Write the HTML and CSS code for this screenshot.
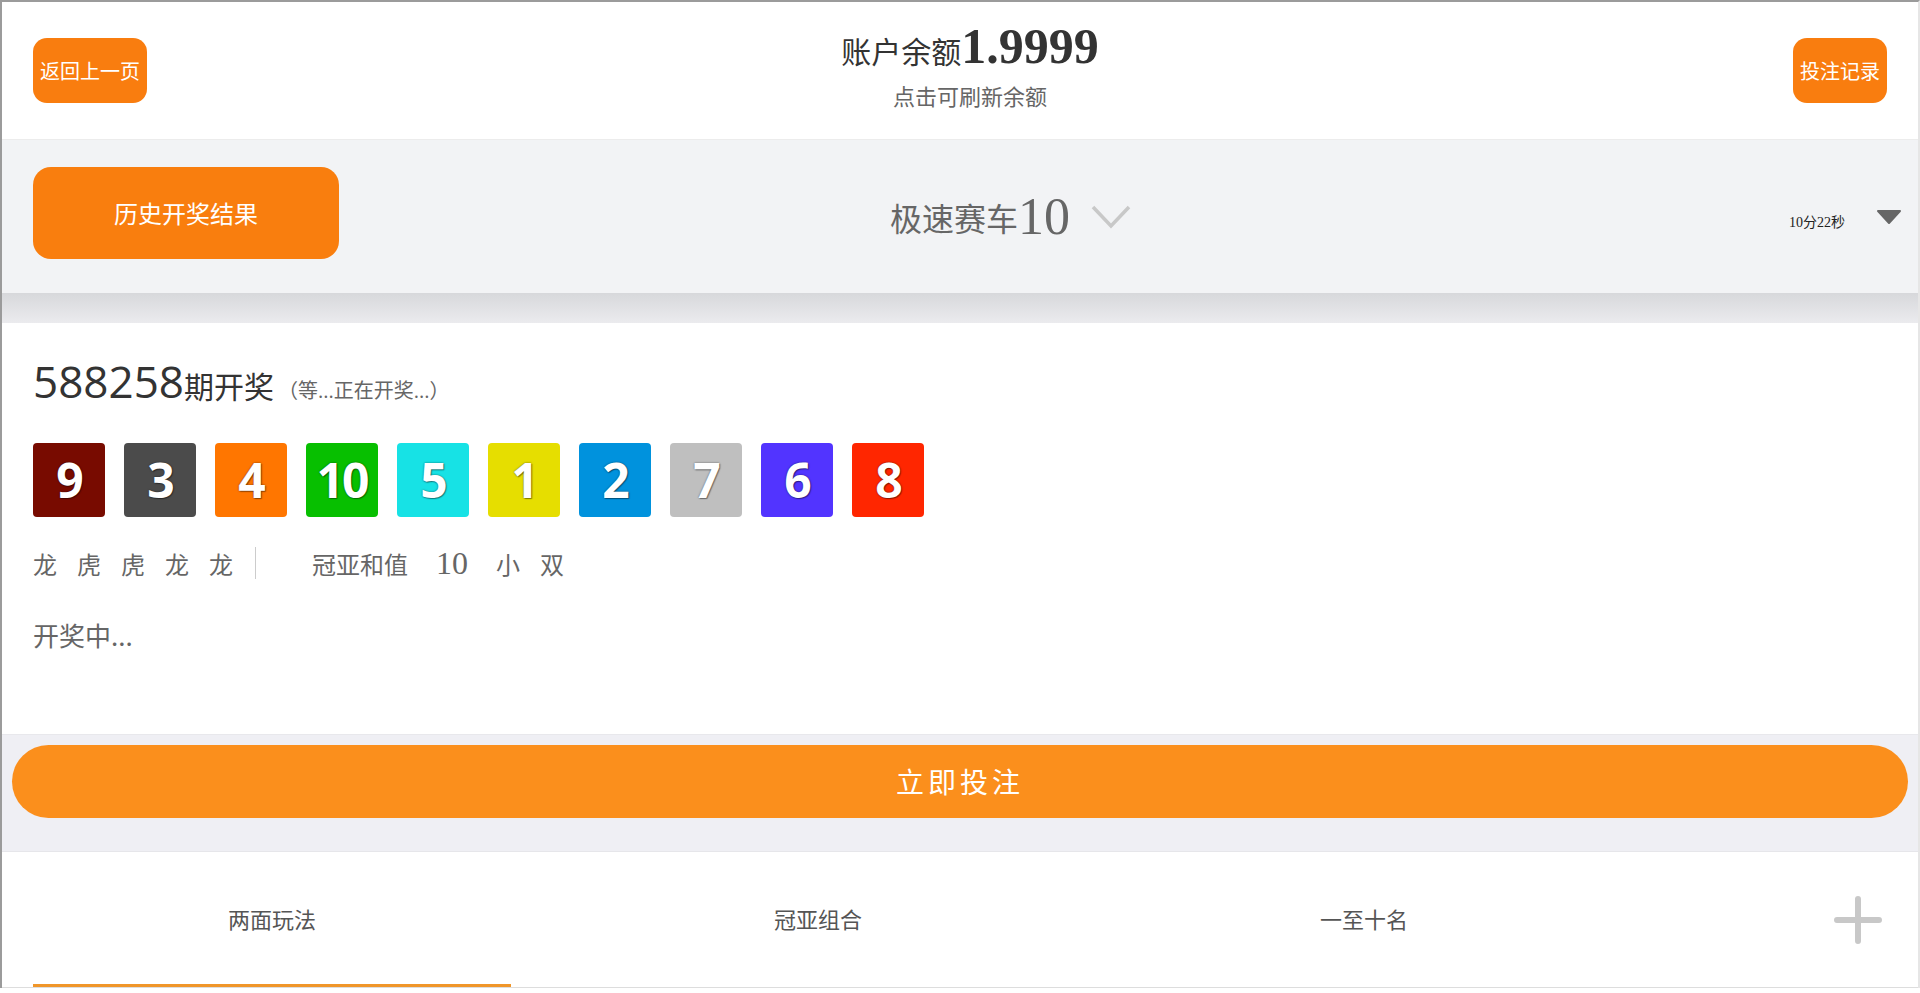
FILE: index.html
```html
<!DOCTYPE html>
<html lang="zh-CN">
<head>
    <meta charset="UTF-8">
    <title>极速赛车</title>
    <link rel="stylesheet" href="styles.css">
</head>
<body>
<div class="page">
    <header class="top">
        <a class="btn-sm">返回上一页</a>
        <div class="title-box">
            <h1 class="title"><span class="cn">账户余额</span>1.9999</h1>
            <p class="sub">点击可刷新余额</p>
        </div>
        <a class="btn-sm">投注记录</a>
    </header>

    <!-- GAME BAR -->
    <section class="bar">
        <a class="btn-hist">历史开奖结果</a>
        <div class="game">
            <span class="cn">极速赛车</span>10
            <svg class="chev" width="42" height="26" viewBox="0 0 42 26"><polyline points="3,3 21,22 39,3" fill="none" stroke="#c8c8c8" stroke-width="3.5"/></svg>
        </div>
        <div class="timer">
            <span>10分22秒</span>
            <svg width="26" height="16" viewBox="0 0 26 16"><path d="M2 2h22L13 14z" fill="#666" stroke="#666" stroke-width="2" stroke-linejoin="round"/></svg>
        </div>
    </section>
    <div class="shade"></div>

    <!-- LAST DRAW -->
    <section class="draw">
        <div class="issue">588258<span class="cn">期开奖</span><small>（等...正在开奖...）</small></div>
        <div class="balls">
            <span class="ball n9">9</span>
            <span class="ball n3">3</span>
            <span class="ball n4">4</span>
            <span class="ball n10">10</span>
            <span class="ball n5">5</span>
            <span class="ball n1">1</span>
            <span class="ball n2">2</span>
            <span class="ball n7">7</span>
            <span class="ball n6">6</span>
            <span class="ball n8">8</span>
        </div>
        <div class="stats">
            <span>龙</span><span>虎</span><span>虎</span><span>龙</span><span>龙</span>
            <i class="sep"></i>
            <span class="sum">冠亚和值</span><span class="num">10</span><span>小</span><span>双</span>
        </div>
        <p class="status">开奖中...</p>
    </section>

    <div class="action"><a class="btn-bet">立即投注</a></div>

    <nav class="tabs">
        <a class="tab active">两面玩法</a>
        <a class="tab">冠亚组合</a>
        <a class="tab">一至十名</a>
        <svg class="plus" width="48" height="48" viewBox="0 0 48 48"><path d="M24 3v42M3 24h42" stroke="#c8c8c8" stroke-width="6" stroke-linecap="round"/></svg>
    </nav>
</div>
</body>
</html>
```

FILE: styles.css
```css
html {
    box-sizing: border-box;
    background: #fff;
}

*, *:before, *:after {
    box-sizing: inherit;
}

body {
    margin: 0;
    font-family: 'Liberation Serif', 'Noto Sans CJK SC', serif;
    color: #333;
}

a {
    text-decoration: none;
}

.page {
    width: 1920px;
    border-top: 2px solid #9b9b9b;
    border-left: 2px solid #9b9b9b;
    border-right: 2px solid #e6e6e6;
}

.cn {
    font-family: 'Noto Sans CJK SC', sans-serif;
}

/* header */
.top {
    display: flex;
    align-items: center;
    height: 137px;
    padding: 0 31px;
    background: #fff;
}

.btn-sm {
    height: 65px;
    line-height: 65px;
    padding: 0 7px;
    border-radius: 14px;
    background: #f97d0f;
    color: #fff;
    font-size: 20px;
    font-family: 'Noto Sans CJK SC', sans-serif;
}

.title-box {
    flex: 1;
    text-align: center;
    padding-bottom: 9px;
}

.title {
    margin: 0;
    font-size: 50px;
    line-height: 48px;
    font-weight: bold;
    color: #333;
}

.title .cn {
    font-size: 30px;
    font-weight: normal;
}

.sub {
    margin: 6px 0 0;
    font-size: 22px;
    line-height: 30px;
    color: #666;
    font-family: 'Noto Sans CJK SC', sans-serif;
}

/* game bar */
.bar {
    display: flex;
    align-items: center;
    height: 154px;
    padding-left: 31px;
    background: #f2f3f5;
    border-top: 1px solid #ececec;
}

.btn-hist {
    align-self: flex-start;
    margin-top: 27px;
    width: 306px;
    height: 92px;
    line-height: 92px;
    border-radius: 18px;
    background: #f97e0e;
    color: #fff;
    text-align: center;
    font-size: 24px;
    font-family: 'Noto Sans CJK SC', sans-serif;
}

.game {
    flex: 1;
    display: flex;
    align-items: center;
    justify-content: center;
    font-size: 52px;
    color: #666;
}

.game .cn {
    font-size: 32px;
}

.game .chev {
    margin-left: 20px;
}

.timer {
    width: 235px;
    padding-right: 16px;
    display: flex;
    align-items: center;
    justify-content: flex-end;
    gap: 31px;
    font-size: 14px;
    color: #222;
}

.timer span {
    padding-top: 8px;
}

.shade {
    height: 30px;
    background: linear-gradient(#d7d8db, #ebebee);
}

/* last draw */
.draw {
    height: 411px;
    padding: 28px 31px 0;
    background: #fff;
}

.issue {
    font-family: 'Open Sans', 'Noto Sans CJK SC', sans-serif;
    font-size: 44px;
    line-height: 60px;
    color: #333;
}

.issue .cn {
    font-size: 30px;
}

.issue small {
    font-size: 20px;
    color: #666;
    margin-left: 4px;
}

.balls {
    display: flex;
    gap: 19px;
    margin-top: 22px;
}

.ball {
    width: 72px;
    height: 74px;
    line-height: 74px;
    border-radius: 4px;
    text-align: center;
    font-family: 'Open Sans', sans-serif;
    font-weight: bold;
    font-size: 48px;
    letter-spacing: -2px;
    color: #fff;
    text-shadow: 0 0 2px rgba(0, 0, 0, 0.55), 1px 1px 1px rgba(0, 0, 0, 0.35);
}

.n1 { background: #e6de00; }
.n2 { background: #0092dd; }
.n3 { background: #4b4b4b; }
.n4 { background: #ff7600; }
.n5 { background: #17e2e5; }
.n6 { background: #5234ff; }
.n7 { background: #bfbfbf; }
.n8 { background: #ff2600; }
.n9 { background: #780b00; }
.n10 { background: #07bf00; }

.stats {
    display: flex;
    align-items: center;
    gap: 20px;
    height: 32px;
    margin-top: 30px;
    font-family: 'Noto Sans CJK SC', sans-serif;
    font-size: 24px;
    color: #666;
}

.stats .sep {
    width: 1px;
    height: 32px;
    margin: 0 36px 0 2px;
    background: #ccc;
}

.stats .sum {
    margin-right: 8px;
}

.stats .num {
    font-family: 'Liberation Serif', serif;
    font-size: 32px;
    margin-right: 8px;
}

.status {
    margin: 37px 0 0;
    font-family: 'Noto Sans CJK SC', sans-serif;
    font-size: 26px;
    color: #666;
}

/* bet button */
.action {
    height: 117px;
    padding: 10px 10px 0;
    background: #efeff4;
    border-top: 1px solid #e8e8ec;
}

.btn-bet {
    display: block;
    height: 73px;
    line-height: 73px;
    border-radius: 37px;
    background: #fb8f1c;
    color: #fff;
    text-align: center;
    font-family: 'Noto Sans CJK SC', sans-serif;
    font-size: 28px;
    letter-spacing: 4px;
}

/* tabs */
.tabs {
    display: flex;
    align-items: stretch;
    height: 137px;
    background: #fff;
    border-top: 1px solid #e6e6ea;
    border-bottom: 1px solid #ddd;
}

.tab {
    width: 478px;
    margin: 0 37px 0 31px;
    display: flex;
    align-items: center;
    justify-content: center;
    border-bottom: 3px solid transparent;
    font-family: 'Noto Sans CJK SC', sans-serif;
    font-size: 22px;
    color: #555;
}

.tab.active {
    border-bottom-color: #f0962a;
}

.plus {
    align-self: center;
    margin: 0 36px 0 auto;
}
```
